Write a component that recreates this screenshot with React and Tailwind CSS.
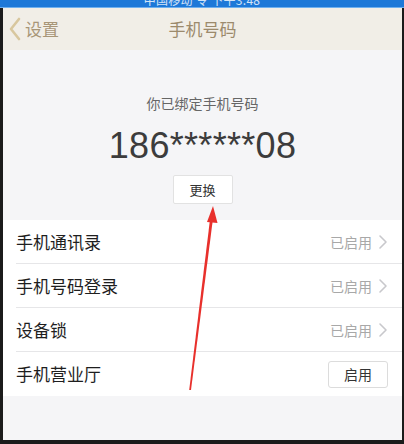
import React from "react";

const font = { fontFamily: '"Noto Sans CJK SC", "Liberation Sans", sans-serif' };

function Chevron() {
  return (
    <svg width="10" height="16" viewBox="0 0 10 16" className="ml-[6px]">
      <path d="M2 2 L8 8 L2 14" fill="none" stroke="#c8c8cc" strokeWidth="1.6" strokeLinecap="round" strokeLinejoin="round" />
    </svg>
  );
}

function Row({ label, right, last }) {
  return (
    <div className="relative flex items-center h-[44px] pl-[13px] pr-[14px]">
      <span className="text-[17px] text-[#1e1e1e] flex-1">{label}</span>
      {right === "button" ? (
        <div className="w-[60px] h-[27px] border border-[#dcdcdc] rounded-[3px] bg-white flex items-center justify-center text-[14px] text-[#333]">
          启用
        </div>
      ) : (
        <div className="flex items-center">
          <span className="text-[14px] text-[#a8a8a8]">已启用</span>
          <Chevron />
        </div>
      )}
      {!last && <div className="absolute left-[13px] right-0 bottom-0 h-px bg-[#e6e6e8]" />}
    </div>
  );
}

export default function App() {
  return (
    <div className="w-[404px] h-[444px] bg-[#1b1b1b] flex flex-col overflow-hidden relative" style={font}>
      <div className="h-[8px] bg-[#1d78d8] border-b border-[#6fb0ef] overflow-hidden flex justify-center">
        <div className="text-white text-[12px] leading-none mt-[-6px] tracking-wide opacity-80">中国移动 令 下午3:48</div>
      </div>
      <div className="flex-1 flex pl-[3px] pr-[2px] pb-[4px]">
        <div className="flex-1 flex flex-col bg-[#f5f5f7]">
          <div className="h-[42px] bg-[#f1eee7] flex items-center relative">
            <div className="flex items-center pl-[5px]">
              <svg width="14" height="24" viewBox="0 0 14 24">
                <path d="M11 2 L3 12 L11 22" fill="none" stroke="#d8c79e" strokeWidth="2.6" strokeLinecap="round" strokeLinejoin="round" />
              </svg>
              <span className="ml-[3px] text-[17px] text-[#a89677]">设置</span>
            </div>
            <div className="absolute left-0 right-0 text-center text-[17px] text-[#9c8a6c] pointer-events-none">手机号码</div>
          </div>
          <div className="flex flex-col items-center pt-[42px] h-[170px]">
            <div className="text-[14px] text-[#666] leading-[22px]">你已绑定手机号码</div>
            <div className="text-[36px] text-[#3c3c3c] leading-[40px] mt-[12px] tracking-[0.3px]" style={{ fontFamily: '"Liberation Sans", sans-serif' }}>
              186******08
            </div>
            <div className="mt-[9px] w-[60px] h-[29px] bg-white border border-[#e2e2e2] rounded-[2px] flex items-center justify-center text-[13px] text-[#333]">
              更换
            </div>
          </div>
          <div className="bg-white">
            <Row label="手机通讯录" />
            <Row label="手机号码登录" />
            <Row label="设备锁" />
            <Row label="手机营业厅" right="button" last />
          </div>
        </div>
      </div>
      <svg className="absolute left-0 top-0 pointer-events-none" width="404" height="444" viewBox="0 0 404 444">
        <polygon points="189.2,390 191,390 212.8,220 210,219.6" fill="#e8302c" />
        <polygon points="213,206 207,222 217.5,223" fill="#e8302c" />
      </svg>
    </div>
  );
}
